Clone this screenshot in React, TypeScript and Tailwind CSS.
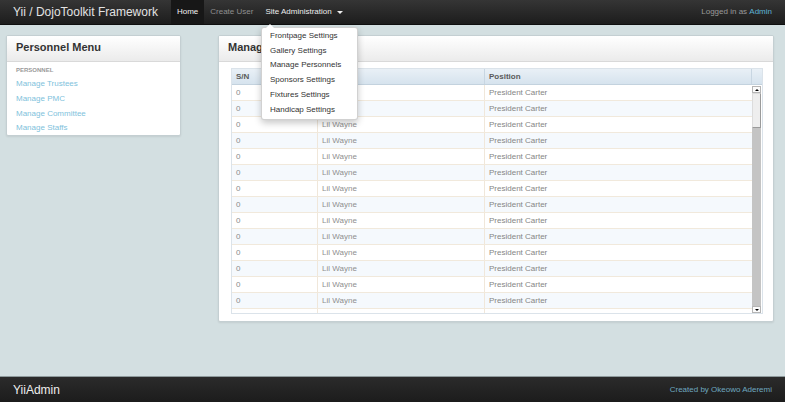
import React from "react";

const rows = Array.from({ length: 15 }, (_, i) => i);
const menuItems = [
  "Frontpage Settings",
  "Gallery Settings",
  "Manage Personnels",
  "Sponsors Settings",
  "Fixtures Settings",
  "Handicap Settings",
];
const links = ["Manage Trustees", "Manage PMC", "Manage Committee", "Manage Staffs"];

export default function App() {
  return (
    <div className="relative w-[785px] h-[402px] overflow-hidden flex flex-col bg-[#d3dfe1] font-['Liberation_Sans',Arial,sans-serif]">
      {/* Navbar */}
      <div className="h-[25px] shrink-0 flex items-stretch px-[13px] bg-linear-to-b from-[#353535] to-[#1d1d1d] border-b border-[#0f0f0f]">
        <div className="flex items-center text-[12px] text-[#e2e2e2] leading-none">Yii / DojoToolkit Framework</div>
        <div className="ml-[13px] flex items-stretch text-[8px] leading-none">
          <div className="px-[6px] flex items-center bg-[#171717] text-[#f2f2f2]">Home</div>
          <div className="px-[6px] flex items-center text-[#8f8f8f]">Create User</div>
          <div className="px-[6px] flex items-center text-[#ececec]">
            Site Administration
            <span className="ml-[5px] w-0 h-0 border-x-[3px] border-x-transparent border-t-[3px] border-t-[#eeeeee]" />
          </div>
        </div>
        <div className="ml-auto flex items-center text-[8px] text-[#9a9a9a] leading-none">
          Logged in as&nbsp;<span className="text-[#5db3d6]">Admin</span>
        </div>
      </div>

      {/* Main */}
      <div className="h-[351px] shrink-0 flex items-start pt-[10px] pl-[6px] gap-[37px]">
        {/* Left panel */}
        <div className="w-[175px] h-[101px] bg-white border border-[#c4cfd2] rounded-[2px] shadow-[0_1px_2px_rgba(0,0,0,0.08)] overflow-hidden">
          <div className="h-[26px] flex items-center pl-[9px] pb-[2px] bg-linear-to-b from-white to-[#ebebeb] border-b border-[#d9d9d9]">
            <span className="text-[11px] font-bold text-[#333]">Personnel Menu</span>
          </div>
          <div className="pl-[9px] pt-[2px]">
            <div className="text-[6px] font-bold leading-[12px] text-[#9a9a9a] uppercase">Personnel</div>
            <div className="mt-[1px]">
              {links.map((l) => (
                <div key={l} className="text-[8px] leading-[14.8px] text-[#80c2dc]">
                  {l}
                </div>
              ))}
            </div>
          </div>
        </div>

        {/* Right panel */}
        <div className="w-[556px] h-[287px] bg-white border border-[#c4cfd2] rounded-[2px] shadow-[0_1px_2px_rgba(0,0,0,0.08)] overflow-hidden">
          <div className="h-[26px] flex items-center pl-[9px] pb-[2px] bg-linear-to-b from-white to-[#ebebeb] border-b border-[#d9d9d9]">
            <span className="text-[11px] font-bold text-[#333]">Manage Personnels</span>
          </div>
          <div className="pt-[6px] pl-[12px]">
            <div className="w-[532px] border border-[#dbe3ea]">
              {/* header */}
              <div className="h-[16px] flex bg-linear-to-b from-[#e9f0f6] to-[#d6e3ee] border-b border-[#c3d2de] text-[8px] font-bold text-[#5a5a5a]">
                <div className="w-[86px] shrink-0 pl-[4px] flex items-center border-r border-[#c8d6e2]">S/N</div>
                <div className="w-[167px] shrink-0 pl-[4px] flex items-center border-r border-[#c8d6e2]">Name</div>
                <div className="w-[267px] shrink-0 pl-[4px] flex items-center border-r border-[#c8d6e2]">Position</div>
                <div className="flex-1" />
              </div>
              {/* body */}
              <div className="h-[228px] flex">
                <div className="w-[520px] overflow-hidden">
                  {rows.map((i) => (
                    <div
                      key={i}
                      className={`h-[16px] flex border-b border-[#f1e9dc] text-[8px] ${i % 2 === 0 ? "bg-white" : "bg-[#f5f9fd]"}`}
                    >
                      <div className="w-[86px] shrink-0 pl-[4px] flex items-center border-r border-[#f0e7da] text-[#8a8a8a]">0</div>
                      <div className="w-[167px] shrink-0 pl-[4px] flex items-center border-r border-[#f0e7da] text-[#8f8f8f]">Lil Wayne</div>
                      <div className="w-[267px] shrink-0 pl-[4px] flex items-center text-[#858585]">President Carter</div>
                    </div>
                  ))}
                </div>
                {/* scrollbar */}
                <div className="w-[10px] flex flex-col bg-white pt-[1px]">
                  <div className="w-[9px] h-[7px] bg-[#fbfbfb] border border-[#b5b5b5] flex items-center justify-center">
                    <span className="w-0 h-0 border-x-[2.5px] border-x-transparent border-b-[2.5px] border-b-black" />
                  </div>
                  <div className="w-[9px] h-[35px] bg-[#eeeeee] border-l border-t border-[#dcdcdc] border-r border-b border-r-[#9a9a9a] border-b-[#9a9a9a]" />
                  <div className="w-[9px] flex-1 bg-[#c4c4c4]" />
                  <div className="w-[9px] h-[7px] bg-[#fbfbfb] border border-[#b5b5b5] flex items-center justify-center">
                    <span className="w-0 h-0 border-x-[2.5px] border-x-transparent border-t-[2.5px] border-t-black" />
                  </div>
                </div>
              </div>
            </div>
          </div>
        </div>
      </div>

      {/* Footer */}
      <div className="h-[26px] shrink-0 flex items-center justify-between px-[13px] bg-linear-to-b from-[#2b2b2b] to-[#1c1c1c] border-t border-[#8e9a9c]">
        <span className="text-[12px] text-[#eeeeee] leading-none">YiiAdmin</span>
        <span className="text-[8px] text-[#6ea8c0] leading-none">Created by Okeowo Aderemi</span>
      </div>

      {/* Dropdown menu overlay */}
      <div className="absolute left-[261px] top-[27px] w-[97px] bg-white border border-[rgba(0,0,0,0.18)] rounded-[3px] shadow-[0_3px_7px_rgba(0,0,0,0.22)] pt-[1px] pb-[2px] z-10">
        <span className="absolute -top-[4px] left-[4px] w-0 h-0 border-x-[4px] border-x-transparent border-b-[4px] border-b-white" />
        {menuItems.map((m) => (
          <div key={m} className="pl-[8px] text-[8px] leading-[14.7px] text-[#333]">
            {m}
          </div>
        ))}
      </div>
    </div>
  );
}
